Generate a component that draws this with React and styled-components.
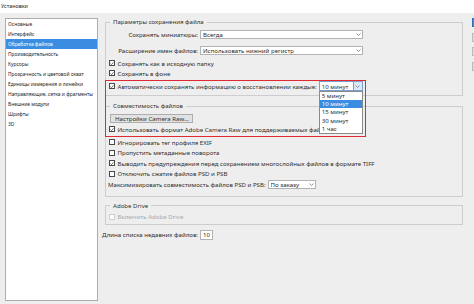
import React from 'react';
import styled, { createGlobalStyle } from 'styled-components';

const Global = createGlobalStyle`
  html, body { margin: 0; padding: 0; background: #eeeeee; }
  body {
    width: 474px; height: 304px; overflow: hidden;
    font-family: "Noto Sans", "Liberation Sans", sans-serif;
    color: #2e2e2e;
  }
`;

const Window = styled.div`
  width: 474px; height: 304px; display: flex; flex-direction: column;
  overflow: hidden; background: #eeeeee;
`;
const TitleBar = styled.div`
  height: 13px; flex-shrink: 0; background: #fff;
  font-size: 5.4px; line-height: 12px; padding-left: 1px; color: #222;
`;
const Body = styled.div`
  flex: 1; display: flex; min-height: 0;
`;
const Sidebar = styled.ul`
  list-style: none; margin: 5px 0 3px 5px; padding: 0;
  width: 93px; flex-shrink: 0; box-sizing: border-box;
  background: #fff; border: 1px solid #adadad;
`;
const NavItem = styled.li`
  height: 10px; line-height: 10px; font-size: 4.9px; padding-left: 2px;
  white-space: nowrap;
  background: ${p => (p.$active ? '#3a8de0' : 'transparent')};
  color: ${p => (p.$active ? '#fff' : '#262626')};
`;
const Main = styled.div`
  position: relative; width: 372px; flex-shrink: 0; margin-left: 2px;
  box-sizing: border-box; padding: 5px 9px 0 2px;
  display: flex; flex-direction: column;
  font-size: 6.1px;
`;
const Group = styled.fieldset`
  margin: ${p => p.$mt || 0}px 0 0 3px; width: 358px; min-width: 0;
  box-sizing: border-box; border: 1px solid #cdcdcd;
  padding: ${p => p.$pt || 4}px 3px ${p => p.$pb || 4}px 3px;
  display: flex; flex-direction: column;
`;
const Legend = styled.legend`
  font-size: 6.1px; line-height: 8px; padding: 0 3px; margin-left: 1px; color: #333;
`;
const FormRow = styled.div`
  display: grid; grid-template-columns: 89px 163px; column-gap: 2px;
  align-items: center; height: 9px; margin-top: ${p => p.$mt || 0}px;
`;
const Label = styled.span`
  text-align: right; white-space: nowrap; color: #2e2e2e;
`;
const SelectBox = styled.div`
  position: relative; display: flex; align-items: center; box-sizing: border-box;
  height: ${p => p.$h || 9}px; width: ${p => (p.$w ? p.$w + 'px' : 'auto')};
  background: #fff; border: 1px solid ${p => (p.$open ? '#7a9fd0' : '#b3b3b3')};
  padding-left: 2px; white-space: nowrap; color: #2b2b2b; flex-shrink: 0;
`;
const SelectText = styled.span`
  flex: 1; overflow: hidden;
`;
const Arrow = styled.span`
  display: flex; align-items: center; justify-content: center;
  width: ${p => (p.$open ? 8 : 7)}px; align-self: stretch;
  background: ${p => (p.$open ? '#dbe8f8' : 'transparent')};
  border-left: ${p => (p.$open ? '1px solid #6f9ad6' : 'none')};
`;
const CheckRow = styled.div`
  display: flex; align-items: center; gap: 2.5px; height: ${p => p.$h || 10}px;
  margin-top: ${p => p.$mt || 0}px; white-space: nowrap;
  color: ${p => (p.$disabled ? '#a8a8a8' : '#2e2e2e')};
`;
const Box = styled.span`
  width: 6px; height: 6px; box-sizing: border-box; flex-shrink: 0;
  background: #fff; border: 1px solid ${p => (p.$disabled ? '#cfcfcf' : '#4a4a4a')};
  display: flex; align-items: center; justify-content: center;
`;
const Button = styled.div`
  width: 83px; height: 9px; box-sizing: border-box; margin-left: 1px;
  background: #e2e2e2; border: 1px solid #adadad;
  display: flex; align-items: center; padding-left: 4px; white-space: nowrap;
`;
const InlineRow = styled.div`
  display: flex; align-items: center; gap: 2px; height: ${p => p.$h || 10}px;
  margin-top: ${p => p.$mt || 0}px; margin-left: ${p => p.$ml || 0}px; white-space: nowrap;
`;
const NumberInput = styled.div`
  width: 13px; height: 10px; box-sizing: border-box; background: #fff;
  border: 1px solid #b3b3b3; display: flex; align-items: center; padding-left: 2px;
`;
const Highlight = styled.div`
  position: absolute; left: 5px; top: 67px; width: 261px; height: 57px;
  box-sizing: border-box; border: 1.5px solid #df2a31; pointer-events: none;
`;
const DropList = styled.ul`
  position: absolute; left: -1px; top: calc(100% + 1px); width: 44px; margin: 0; padding: 0;
  list-style: none; box-sizing: border-box; background: #fff; border: 1px solid #8a8a8a;
  z-index: 2;
`;
const DropItem = styled.li`
  height: 8.2px; line-height: 8.2px; padding-left: 2px;
  background: ${p => (p.$active ? '#3a8de0' : 'transparent')};
  color: ${p => (p.$active ? '#fff' : '#2b2b2b')};
`;
const ButtonCol = styled.div`
  width: 50px; flex-shrink: 0; padding-top: 5px;
  display: flex; flex-direction: column; gap: 5.5px;
`;
const SideButton = styled.div`
  height: 9px; box-sizing: border-box; font-size: 6px; text-align: center; line-height: 7px;
  background: ${p => (p.$primary ? '#3a8de0' : '#e1e1e1')};
  border: 1px solid ${p => (p.$primary ? '#2a6fc0' : '#b9b9b9')};
  color: ${p => (p.$primary ? '#fff' : '#222')};
`;

const Chevron = () => (
  <svg width="5" height="3" viewBox="0 0 5 3">
    <polyline points="0.5,0.5 2.5,2.5 4.5,0.5" fill="none" stroke="#7a7a7a" strokeWidth="0.8" />
  </svg>
);
const Tick = () => (
  <svg width="5" height="5" viewBox="0 0 5 5">
    <polyline points="0.6,2.6 1.9,3.9 4.4,1" fill="none" stroke="#333" strokeWidth="0.9" />
  </svg>
);

const Select = ({ value, w, open, children }) => (
  <SelectBox $w={w} $open={open} $h={open ? 10 : 9}>
    <SelectText>{value}</SelectText>
    <Arrow $open={open}><Chevron /></Arrow>
    {children}
  </SelectBox>
);

const Check = ({ checked, disabled, children, h, mt }) => (
  <CheckRow $h={h} $mt={mt} $disabled={disabled}>
    <Box $disabled={disabled}>{checked && <Tick />}</Box>
    <span>{children}</span>
  </CheckRow>
);

const nav = [
  'Основные', 'Интерфейс', 'Обработка файлов', 'Производительность', 'Курсоры',
  'Прозрачность и цветовой охват', 'Единицы измерения и линейки',
  'Направляющие, сетка и фрагменты', 'Внешние модули', 'Шрифты', '3D',
];
const intervals = ['5 минут', '10 минут', '15 минут', '30 минут', '1 час'];

export default function App() {
  return (
    <Window>
      <Global />
      <TitleBar>Установки</TitleBar>
      <Body>
        <Sidebar>
          {nav.map((n, i) => (
            <NavItem key={n} $active={i === 2}>{n}</NavItem>
          ))}
        </Sidebar>
        <Main>
          <Group $pt={4} $pb={4}>
            <Legend>Параметры сохранения файла</Legend>
            <FormRow>
              <Label>Сохранять миниатюры:</Label>
              <Select value="Всегда" />
            </FormRow>
            <FormRow $mt={7}>
              <Label>Расширение имен файлов:</Label>
              <Select value="Использовать нижний регистр" />
            </FormRow>
            <Check checked mt={3}>Сохранять как в исходную папку</Check>
            <Check checked>Сохранять в фоне</Check>
            <InlineRow $mt={3}>
              <Check checked>Автоматически сохранять информацию о восстановлении каждые:</Check>
              <Select value="10 минут" w={44} open>
                <DropList>
                  {intervals.map((t, i) => (
                    <DropItem key={t} $active={i === 1}>{t}</DropItem>
                  ))}
                </DropList>
              </Select>
            </InlineRow>
          </Group>

          <Group $mt={6} $pt={4} $pb={6}>
            <Legend>Совместимость файлов</Legend>
            <Button>Настройки Camera Raw...</Button>
            <Check checked mt={1}>Использовать формат Adobe Camera Raw для поддерживаемых файлов</Check>
            <Check mt={3} h={10.5}>Игнорировать тег профиля EXIF</Check>
            <Check h={10.5}>Пропустить метаданные поворота</Check>
            <Check checked h={10.5}>Выводить предупреждения перед сохранением многослойных файлов в формате TIFF</Check>
            <Check h={10.5}>Отключить сжатие файлов PSD и PSB</Check>
            <InlineRow $h={10.5} $ml={-1}>
              <span>Максимизировать совместимость файлов PSD и PSB:</span>
              <Select value="По заказу" w={48} />
            </InlineRow>
          </Group>

          <Group $mt={5} $pt={2} $pb={2}>
            <Legend>Adobe Drive</Legend>
            <Check disabled>Включить Adobe Drive</Check>
          </Group>

          <InlineRow $mt={5}>
            <span>Длина списка недавних файлов:</span>
            <NumberInput>10</NumberInput>
          </InlineRow>

          <Highlight />
        </Main>
        <ButtonCol>
          <SideButton $primary>OK</SideButton>
          <SideButton>Отмена</SideButton>
          <SideButton>Назад</SideButton>
          <SideButton>Далее</SideButton>
        </ButtonCol>
      </Body>
    </Window>
  );
}
